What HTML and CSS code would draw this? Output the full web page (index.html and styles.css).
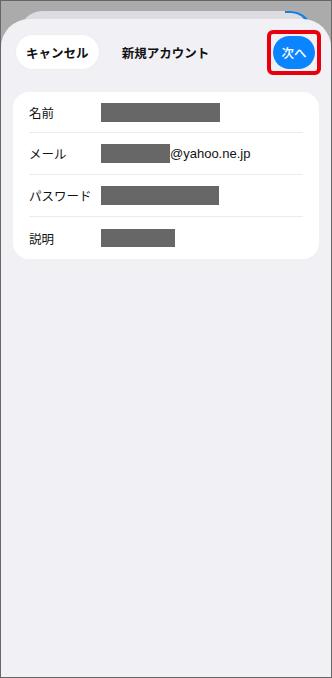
FILE: index.html
```html
<!DOCTYPE html>
<html lang="ja">
<head>
<meta charset="utf-8">
<title>新規アカウント</title>
<link rel="stylesheet" href="styles.css">
</head>
<body>
<div class="frame">
  <div class="back-sheet"></div>
  <div class="sheet">
    <header class="nav">
      <button class="cancel">キャンセル</button>
      <h1 class="title">新規アカウント</h1>
      <div class="next-wrap">
        <span class="highlight"><button class="next">次へ</button></span>
      </div>
    </header>
    <section class="card">
      <div class="row">
        <span class="label">名前</span>
        <span class="value"><span class="mask mask-name"></span></span>
      </div>
      <div class="row">
        <span class="label">メール</span>
        <span class="value"><span class="mask mask-mail"></span><span class="domain">@yahoo.ne.jp</span></span>
      </div>
      <div class="row">
        <span class="label">パスワード</span>
        <span class="value"><span class="mask mask-pass"></span></span>
      </div>
      <div class="row">
        <span class="label">説明</span>
        <span class="value"><span class="mask mask-desc"></span></span>
      </div>
    </section>
  </div>
</div>
</body>
</html>
```

FILE: styles.css
```css
* { box-sizing: border-box; }

html, body {
  margin: 0;
  padding: 0;
}

body {
  font-family: "Liberation Sans", "Noto Sans CJK JP", sans-serif;
  color: #111;
}

.frame {
  position: relative;
  width: 332px;
  height: 678px;
  border: 1px solid #666;
  background: #ababab;
  display: flex;
  flex-direction: column;
  overflow: hidden;
}

.back-sheet {
  position: absolute;
  left: 19px;
  right: 18px;
  top: 10px;
  height: 40px;
  background: #dcdce1;
  border-radius: 22px 22px 0 0;
}

.back-sheet::after {
  content: "";
  position: absolute;
  top: 0;
  right: 0;
  width: 24px;
  height: 24px;
  border-top: 2px solid #1a7fe0;
  border-right: 4px solid #1a7fe0;
  border-top-right-radius: 22px;
}

.sheet {
  position: relative;
  margin-top: 18px;
  flex: 1;
  background: #f1f0f5;
  border-radius: 28px 28px 0 0;
  display: flex;
  flex-direction: column;
}

.nav {
  display: grid;
  grid-template-columns: 1fr auto 1fr;
  align-items: center;
  padding: 16px 16px 0 15px;
  height: 50px;
}

.cancel {
  justify-self: start;
  height: 34px;
  padding: 0 10px;
  border: none;
  border-radius: 17px;
  background: #fff;
  font-family: "Noto Sans CJK JP", sans-serif;
  font-weight: 700;
  font-size: 12.5px;
  color: #111;
  box-shadow: 0 0 3px rgba(0,0,0,0.04);
}

.title {
  margin: 0;
  font-family: "Noto Sans CJK JP", sans-serif;
  font-weight: 700;
  font-size: 12.5px;
  color: #111;
}

.next-wrap {
  justify-self: end;
  display: flex;
}

.highlight {
  display: flex;
  margin: -6px;
  padding: 2px;
  border: 4px solid #e8000f;
  border-radius: 6px;
}

.next {
  width: 42px;
  height: 33px;
  padding: 0;
  border: none;
  border-radius: 17px;
  background: #0a84ff;
  color: #fff;
  font-family: "Noto Sans CJK JP", sans-serif;
  font-size: 12.5px;
  font-weight: 500;
}

.card {
  margin: 23px 12px 0 12px;
  padding: 0 16px;
  background: #fff;
  border-radius: 16px;
}

.row {
  display: grid;
  grid-template-columns: 72px 1fr;
  align-items: center;
  height: 42px;
  border-bottom: 1px solid #ebebef;
}

.row:first-child {
  height: 41px;
}

.row:last-child {
  border-bottom: none;
}

.label {
  font-family: "Noto Sans CJK JP", sans-serif;
  font-size: 12.5px;
  color: #111;
}

.value {
  display: flex;
  align-items: center;
}

.mask {
  display: block;
  height: 19px;
  background: #676767;
}

.mask-name { width: 119px; }
.mask-mail { width: 69px; }
.mask-pass { width: 118px; }
.mask-desc { width: 74px; height: 18px; }

.domain {
  font-size: 13px;
  color: #111;
}
```
